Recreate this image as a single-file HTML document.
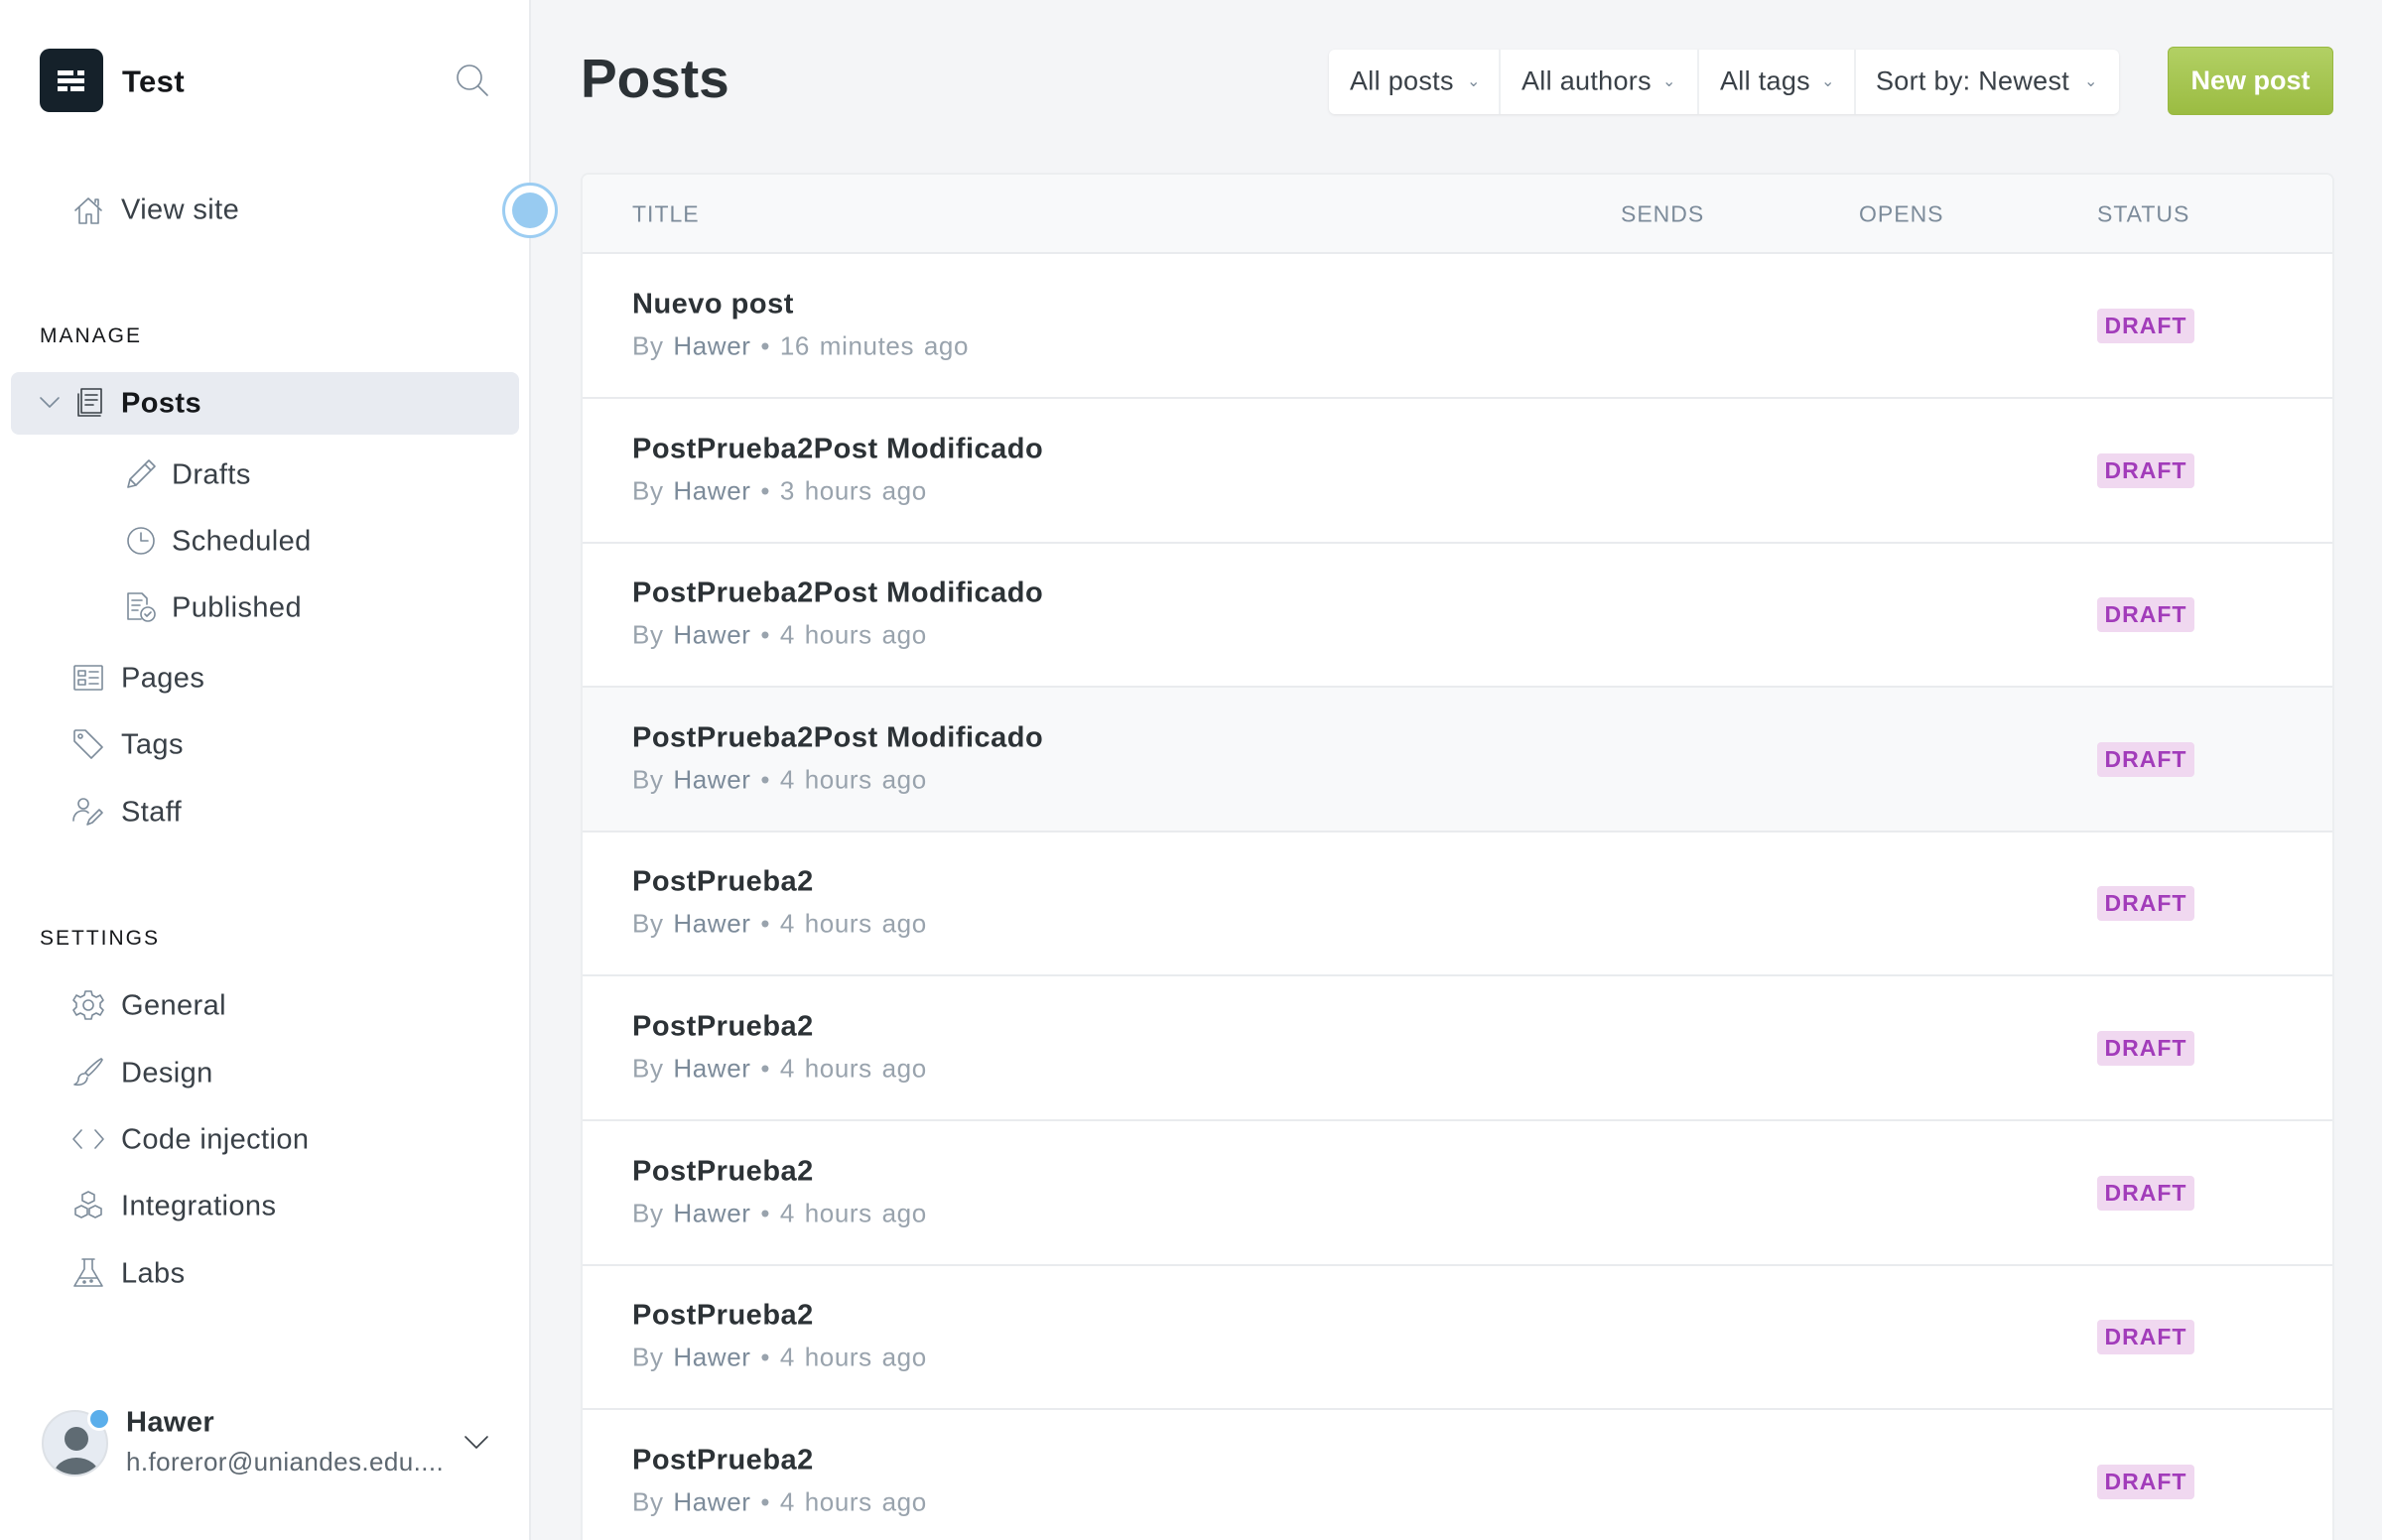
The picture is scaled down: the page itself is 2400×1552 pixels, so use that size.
<!DOCTYPE html>
<html><head><meta charset="utf-8"><style>
*{box-sizing:border-box;margin:0;padding:0}
html,body{width:2400px;height:1552px;overflow:hidden}
body{background:#f4f5f7;font-family:"Liberation Sans",sans-serif;color:#394047;position:relative}
.side{position:absolute;left:0;top:0;width:535px;height:1552px;background:#fff;border-right:2px solid #e9ebee}
.a{position:absolute}
.nav{position:absolute;font-size:29px;color:#394047;line-height:1;transform:translateY(-50%);letter-spacing:0.4px}
.ic{position:absolute;transform:translate(-50%,-50%)}
.ic svg{display:block;fill:none;stroke:#7c8b9a;stroke-width:1.6;stroke-linecap:round;stroke-linejoin:round}
.hd{position:absolute;font-size:21px;letter-spacing:2px;color:#15171a;transform:translateY(-50%)}
.table{position:absolute;left:585px;top:174px;width:1767px;height:1378px;background:#fff;border:2px solid #eceef0;border-bottom:none;border-radius:8px 8px 0 0;overflow:hidden}
.th{position:absolute;top:0;left:0;right:0;height:80px;background:#f8f9fa;border-bottom:2px solid #e9ebee}
.th span{position:absolute;top:40px;transform:translateY(-50%);font-size:23px;letter-spacing:1px;color:#7c8b9a}
.row{position:absolute;left:0;right:0;height:146px;border-bottom:2px solid #e9ebee}
.row .t{position:absolute;left:50px;top:51px;transform:translateY(-50%);font-size:29px;font-weight:bold;color:#2c3236;letter-spacing:0.5px}
.row .m{position:absolute;left:50px;top:93px;transform:translateY(-50%);font-size:26px;color:#99a3ad;letter-spacing:0.6px;word-spacing:2px}
.row .m b{font-weight:normal;color:#7c8b9a}
.badge{position:absolute;left:1526px;top:55px;width:98px;height:35px;background:#f0d8f0;border-radius:4px;color:#a23cba;font-size:23px;font-weight:bold;letter-spacing:1px;text-align:center;line-height:35px}
.filt{position:absolute;left:1339px;top:50px;width:796px;height:65px;background:#fff;border-radius:6px;box-shadow:0 1px 3px rgba(0,0,0,.08)}
.filt span{position:absolute;top:32px;transform:translateY(-50%);font-size:27px;color:#394047;letter-spacing:0.3px}
.filt i{position:absolute;top:0;width:2px;height:65px;background:#eef0f2}
</style></head><body>
<div class="side">
  <div class="a" style="left:40px;top:49px;width:64px;height:64px;background:#15212a;border-radius:10px">
    <svg width="64" height="64" viewBox="0 0 64 64"><g fill="#fff"><rect x="18" y="22" width="16" height="5"/><rect x="38" y="22" width="7" height="5"/><rect x="18" y="30" width="27" height="5"/><rect x="18" y="38" width="10" height="5"/><rect x="31" y="38" width="14" height="5"/></g></svg>
  </div>
  <div class="nav" style="left:123px;top:82px;font-size:31px;font-weight:bold;color:#15171a">Test</div>
  <div class="ic" style="left:476px;top:81px"><svg width="36" height="36" viewBox="0 0 36 36"><circle cx="15" cy="15" r="12"/><path d="M24 24l9 9"/></svg></div>

  <div class="ic" style="left:89px;top:212px"><svg width="32" height="32" viewBox="0 0 32 32"><path d="M3 16L16 4l13 12M7 13v16h7v-9h5v9h7V13M23 8V5h3v6"/></svg></div>
  <div class="nav" style="left:122px;top:212px">View site</div>
  <div class="a" style="left:506px;top:184px;width:56px;height:56px;border-radius:50%;border:3px solid #9ccdf2;background:#fff"></div>
  <div class="a" style="left:516px;top:194px;width:36px;height:36px;border-radius:50%;background:#98cbf1"></div>

  <div class="hd" style="left:40px;top:339px">MANAGE</div>
  <div class="a" style="left:11px;top:375px;width:512px;height:63px;background:#e8ebf1;border-radius:8px"></div>
  <div class="ic" style="left:50px;top:406px"><svg width="22" height="14" viewBox="0 0 22 14"><path d="M2 2l9 9 9-9"/></svg></div>
  <div class="ic" style="left:89px;top:406px"><svg width="34" height="34" viewBox="0 0 34 34" style="stroke:#394047"><path d="M7 8v22h22"/><rect x="10" y="3" width="20" height="24"/><path d="M14 9h12M14 14h12M14 19h8"/></svg></div>
  <div class="nav" style="left:122px;top:407px;font-weight:bold;color:#15171a">Posts</div>

  <div class="ic" style="left:142px;top:478px"><svg width="34" height="34" viewBox="0 0 34 34"><path d="M4 30l2-8L25 3l6 6-19 19zM6 22l6 6M21 7l6 6"/></svg></div>
  <div class="nav" style="left:173px;top:479px">Drafts</div>
  <div class="ic" style="left:142px;top:545px"><svg width="32" height="32" viewBox="0 0 32 32"><circle cx="16" cy="16" r="13"/><path d="M16 8v8h7"/></svg></div>
  <div class="nav" style="left:173px;top:546px">Scheduled</div>
  <div class="ic" style="left:142px;top:612px"><svg width="34" height="34" viewBox="0 0 34 34"><path d="M17 29H4V3h14l5 5v6M8 10h10M8 15h8M8 20h6"/><circle cx="24" cy="24" r="7"/><path d="M21 24l2 2 4-4"/></svg></div>
  <div class="nav" style="left:173px;top:613px">Published</div>

  <div class="ic" style="left:89px;top:683px"><svg width="32" height="32" viewBox="0 0 32 32"><rect x="2" y="4" width="28" height="24" rx="1"/><rect x="6" y="9" width="7" height="5"/><rect x="6" y="18" width="7" height="5"/><path d="M17 10h9M17 16h9M17 22h9"/></svg></div>
  <div class="nav" style="left:122px;top:684px">Pages</div>
  <div class="ic" style="left:89px;top:750px"><svg width="34" height="34" viewBox="0 0 34 34"><path d="M3 4v10l17 17 11-11L14 3H4z"/><circle cx="9" cy="9" r="2"/></svg></div>
  <div class="nav" style="left:122px;top:751px">Tags</div>
  <div class="ic" style="left:89px;top:818px"><svg width="34" height="34" viewBox="0 0 34 34"><circle cx="12" cy="9" r="5"/><path d="M2 26c0-6 4-10 10-10 2 0 4 1 5 2M16 30l2-5 10-10 3 3-10 10z"/></svg></div>
  <div class="nav" style="left:122px;top:819px">Staff</div>

  <div class="hd" style="left:40px;top:946px">SETTINGS</div>
  <div class="ic" style="left:89px;top:1013px"><svg width="34" height="34" viewBox="0 0 34 34"><circle cx="17" cy="17" r="5"/><path d="M14 3h6l1 4 4 2 4-2 3 5-3 3v4l3 3-3 5-4-2-4 2-1 4h-6l-1-4-4-2-4 2-3-5 3-3v-4L2 12l3-5 4 2 4-2z"/></svg></div>
  <div class="nav" style="left:122px;top:1014px">General</div>
  <div class="ic" style="left:89px;top:1081px"><svg width="34" height="34" viewBox="0 0 34 34"><path d="M30 3c-4 2-12 9-16 14l3 3c5-4 12-12 14-16zM13 18c-4 0-6 3-6 6 0 2-2 4-4 5 5 1 12 0 13-7"/></svg></div>
  <div class="nav" style="left:122px;top:1082px">Design</div>
  <div class="ic" style="left:89px;top:1148px"><svg width="34" height="24" viewBox="0 0 34 24"><path d="M10 3L2 12l8 9M24 3l8 9-8 9"/></svg></div>
  <div class="nav" style="left:122px;top:1149px">Code injection</div>
  <div class="ic" style="left:89px;top:1215px"><svg width="34" height="34" viewBox="0 0 34 34"><path d="M17 3l6 3v6l-6 3-6-3V6zM10 17l6 3v6l-6 3-6-3v-6zM24 17l6 3v6l-6 3-6-3v-6z"/></svg></div>
  <div class="nav" style="left:122px;top:1216px">Integrations</div>
  <div class="ic" style="left:89px;top:1283px"><svg width="34" height="34" viewBox="0 0 34 34"><path d="M11 3h12M13 3v10L3 30h28L21 13V3M8 22h18"/><circle cx="13" cy="26" r="1"/><circle cx="20" cy="25" r="1"/></svg></div>
  <div class="nav" style="left:122px;top:1284px">Labs</div>

  <div class="a" style="left:42px;top:1421px;width:67px;height:67px;border-radius:50%;background:#e6ebf2;border:2px solid #dde1e6;overflow:hidden">
    <svg width="67" height="67" viewBox="0 0 67 67"><circle cx="33" cy="27" r="12" fill="#5f6b73"/><ellipse cx="33" cy="64" rx="23" ry="18" fill="#5f6b73"/></svg>
  </div>
  <div class="a" style="left:88px;top:1418px;width:24px;height:24px;border-radius:50%;background:#5aaeeb;border:3px solid #fff"></div>
  <div class="nav" style="left:127px;top:1434px;font-weight:bold;color:#2c3236">Hawer</div>
  <div class="nav" style="left:127px;top:1473px;font-size:26px;color:#5d6770">h.foreror@uniandes.edu....</div>
  <div class="ic" style="left:480px;top:1454px"><svg width="26" height="16" viewBox="0 0 26 16"><path d="M2 2l11 11L24 2" style="stroke:#394047"/></svg></div>
</div>

<div class="a" style="left:585px;top:52px;font-size:55px;font-weight:bold;color:#2c3236;line-height:1">Posts</div>
<div class="filt">
  <span style="left:21px">All posts</span><span style="left:139px;font-size:16px;color:#7c8b9a">&#8964;</span>
  <i style="left:171px"></i>
  <span style="left:194px">All authors</span><span style="left:336px;font-size:16px;color:#7c8b9a">&#8964;</span>
  <i style="left:371px"></i>
  <span style="left:394px">All tags</span><span style="left:496px;font-size:16px;color:#7c8b9a">&#8964;</span>
  <i style="left:529px"></i>
  <span style="left:551px">Sort by: Newest</span><span style="left:761px;font-size:16px;color:#7c8b9a">&#8964;</span>
</div>
<div class="a" style="left:2184px;top:47px;width:167px;height:69px;border-radius:6px;background:linear-gradient(#b2d064,#9bbc42);border:1px solid #98b840;color:#fff;font-size:27px;font-weight:bold;text-align:center;line-height:67px">New post</div>

<div class="table">
  <div class="th"><span style="left:50px">TITLE</span><span style="left:1046px">SENDS</span><span style="left:1286px">OPENS</span><span style="left:1526px">STATUS</span></div>
  <div class="row" style="top:80px"><div class="t">Nuevo post</div><div class="m">By <b>Hawer</b> • 16 minutes ago</div><div class="badge">DRAFT</div></div>
  <div class="row" style="top:226px"><div class="t">PostPrueba2Post Modificado</div><div class="m">By <b>Hawer</b> • 3 hours ago</div><div class="badge">DRAFT</div></div>
  <div class="row" style="top:371px"><div class="t">PostPrueba2Post Modificado</div><div class="m">By <b>Hawer</b> • 4 hours ago</div><div class="badge">DRAFT</div></div>
  <div class="row" style="top:517px;background:#f8f9fa"><div class="t">PostPrueba2Post Modificado</div><div class="m">By <b>Hawer</b> • 4 hours ago</div><div class="badge">DRAFT</div></div>
  <div class="row" style="top:662px"><div class="t">PostPrueba2</div><div class="m">By <b>Hawer</b> • 4 hours ago</div><div class="badge">DRAFT</div></div>
  <div class="row" style="top:808px"><div class="t">PostPrueba2</div><div class="m">By <b>Hawer</b> • 4 hours ago</div><div class="badge">DRAFT</div></div>
  <div class="row" style="top:954px"><div class="t">PostPrueba2</div><div class="m">By <b>Hawer</b> • 4 hours ago</div><div class="badge">DRAFT</div></div>
  <div class="row" style="top:1099px"><div class="t">PostPrueba2</div><div class="m">By <b>Hawer</b> • 4 hours ago</div><div class="badge">DRAFT</div></div>
  <div class="row" style="top:1245px"><div class="t">PostPrueba2</div><div class="m">By <b>Hawer</b> • 4 hours ago</div><div class="badge">DRAFT</div></div>
</div>
</body></html>
